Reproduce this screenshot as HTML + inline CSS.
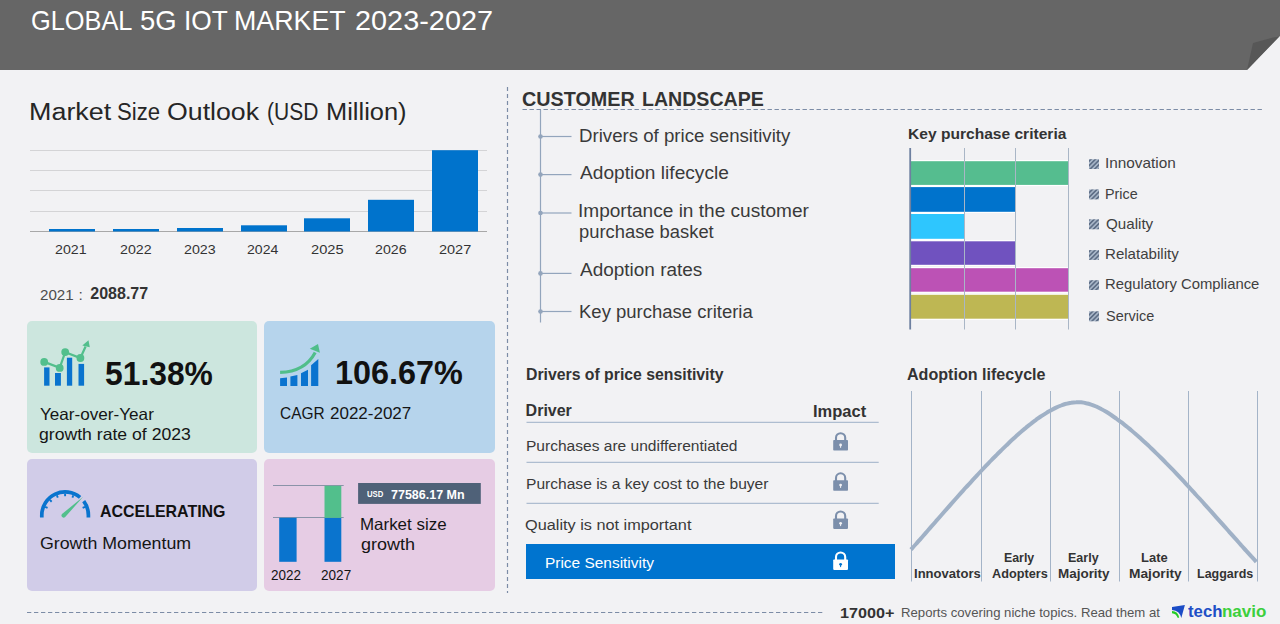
<!DOCTYPE html>
<html><head><meta charset="utf-8">
<style>
html,body{margin:0;padding:0;}
body{width:1280px;height:624px;overflow:hidden;background:#F2F2F4;position:relative;font-family:"Liberation Sans",sans-serif;}
.t{position:absolute;white-space:nowrap;line-height:1;transform-origin:0 0;}
.b{font-weight:bold;}
.abs{position:absolute;}
svg{position:absolute;left:0;top:0;}
</style></head><body>

<!-- HEADER -->
<svg width="1280" height="624" style="z-index:0">
  <polygon points="0,0 1280,0 1280,36 1247,70 0,70" fill="#666666"/>
  <polygon points="1247,70 1253,43 1273,37.5 1279,36.5" fill="#575757"/>
</svg>

<!-- LEFT CHART -->
<svg width="1280" height="624">
  <g stroke="#D4D4D6" stroke-width="1">
    <line x1="30" y1="150.5" x2="487" y2="150.5"/>
    <line x1="30" y1="170.5" x2="487" y2="170.5"/>
    <line x1="30" y1="190.5" x2="487" y2="190.5"/>
    <line x1="30" y1="211.5" x2="487" y2="211.5"/>
  </g>
  <line x1="30" y1="231.5" x2="487" y2="231.5" stroke="#A8A8A8" stroke-width="1"/>
  <g fill="#0073CC">
    <rect x="49" y="229" width="46" height="2.5"/>
    <rect x="113" y="229" width="46" height="2.5"/>
    <rect x="177" y="228" width="46" height="3.5"/>
    <rect x="241" y="225.3" width="46" height="6.2"/>
    <rect x="304" y="218.3" width="46" height="13.2"/>
    <rect x="368" y="199.8" width="46" height="31.7"/>
    <rect x="432" y="150.2" width="46" height="81.3"/>
  </g>
</svg>

<!-- CARDS -->
<div class="abs" style="left:27px;top:321px;width:230px;height:131.5px;background:#CCE6DE;border-radius:5px"></div>
<div class="abs" style="left:264px;top:321px;width:230.5px;height:131.5px;background:#B6D4EC;border-radius:5px"></div>
<div class="abs" style="left:27px;top:459px;width:230px;height:132px;background:#D1CCE8;border-radius:5px"></div>
<div class="abs" style="left:264px;top:459px;width:230.5px;height:132px;background:#E6CCE4;border-radius:5px"></div>


<!-- CARD ICONS -->
<svg width="1280" height="624">
  <!-- card1 icon -->
  <g fill="#0A74CE">
    <rect x="44.1" y="367.4" width="5.4" height="18.3"/>
    <rect x="55" y="373" width="5.9" height="12.7"/>
    <rect x="66.9" y="357.7" width="5.3" height="28"/>
    <rect x="78.5" y="363.9" width="5.6" height="21.8"/>
  </g>
  <g fill="#52BF8C" stroke="#52BF8C">
    <polyline points="44.2,361.9 59.7,367.9 65.2,352.1 80.4,358 85.6,346.5" fill="none" stroke-width="2.2"/>
    <circle cx="44.2" cy="361.9" r="3.9" stroke="none"/>
    <circle cx="59.7" cy="367.9" r="3.9" stroke="none"/>
    <circle cx="65.2" cy="352.1" r="3.9" stroke="none"/>
    <circle cx="80.4" cy="358" r="3.9" stroke="none"/>
    <polygon points="88.5,340.3 82.3,345.6 89.8,347.2" stroke="none"/>
  </g>
  <!-- card2 icon -->
  <g fill="#0A73CF">
    <polygon points="280.1,378.2 287,377.6 287,385.9 280.1,385.9"/>
    <polygon points="290.4,376.6 297.4,375 297.4,385.9 290.4,385.9"/>
    <polygon points="301,373.3 308,369.7 308,385.9 301,385.9"/>
    <polygon points="311.1,365.2 318.3,358.9 318.3,385.9 311.1,385.9"/>
  </g>
  <path d="M280.1,372.4 C295,372 308,366 315.2,352.5" fill="none" stroke="#50BE8A" stroke-width="3.1"/>
  <polygon points="318,344 309.8,348.8 319.9,352.8" fill="#50BE8A"/>
  <!-- gauge -->
  <path d="M41.80,517.4 L41.80,515.2 A23.3,23.3 0 0 1 80.08,497.35" fill="none" stroke="#0A74CE" stroke-width="3.7"/>
  <path d="M83.71,501.18 A23.3,23.3 0 0 1 88.40,515.2 L88.40,517.4" fill="none" stroke="#0A74CE" stroke-width="3.7"/>
  <g stroke="#0A74CE" stroke-width="1.9"><line x1="45.14" y1="506.93" x2="47.55" y2="507.93"/><line x1="49.83" y1="499.93" x2="51.66" y2="501.76"/><line x1="56.83" y1="495.24" x2="57.83" y2="497.65"/><line x1="65.10" y1="493.60" x2="65.10" y2="496.20"/><line x1="73.37" y1="495.24" x2="72.37" y2="497.65"/><line x1="85.06" y1="506.93" x2="82.65" y2="507.93"/></g>
  <path d="M83.2,496.8 L65.2,517.0 A2.2,2.2 0 0 1 62.0,514.0 Z" fill="#52BF8C"/>
  <!-- card4 mini chart -->
  <g stroke="#8A93A8" stroke-width="1">
    <line x1="273" y1="485.5" x2="343.7" y2="485.5"/>
    <line x1="273" y1="517.5" x2="343.7" y2="517.5"/>
  </g>
  <rect x="279.2" y="517.8" width="17.4" height="44" fill="#0A74CE"/>
  <rect x="324.5" y="517.8" width="16.8" height="44" fill="#0A74CE"/>
  <rect x="324.5" y="485.8" width="16.8" height="32" fill="#52BF8C"/>
  <rect x="358.1" y="483" width="122.7" height="20.9" fill="#4F6178"/>
</svg>

<svg width="1280" height="624">
  <!-- dashed separators -->
  <line x1="507.5" y1="87" x2="507.5" y2="593" stroke="#7C8CA6" stroke-width="1.2" stroke-dasharray="4,3"/>
  <line x1="522.5" y1="109.5" x2="1262" y2="109.5" stroke="#7C8CA6" stroke-width="1.2" stroke-dasharray="4.4,2.6"/>
  <line x1="27" y1="612.5" x2="823" y2="612.5" stroke="#7C8CA6" stroke-width="1.2" stroke-dasharray="4.3,2.7"/>
  <!-- tree -->
  <g stroke="#93A5BC" stroke-width="1.2" fill="#93A5BC">
    <line x1="540.5" y1="110" x2="540.5" y2="322.5"/>
    <line x1="540.5" y1="136.5" x2="571.5" y2="136.5"/>
    <line x1="540.5" y1="174.6" x2="571.5" y2="174.6"/>
    <line x1="540.5" y1="213" x2="571.5" y2="213"/>
    <line x1="540.5" y1="273.4" x2="571.5" y2="273.4"/>
    <line x1="540.5" y1="311.5" x2="571.5" y2="311.5"/>
    <circle cx="540.5" cy="136.5" r="2.3" stroke="none"/>
    <circle cx="540.5" cy="174.6" r="2.3" stroke="none"/>
    <circle cx="540.5" cy="213" r="2.3" stroke="none"/>
    <circle cx="540.5" cy="273.4" r="2.3" stroke="none"/>
    <circle cx="540.5" cy="311.5" r="2.3" stroke="none"/>
  </g>
  <!-- KPC bars -->
  <g fill="#ffffff">
    <rect x="911" y="160" width="157.5" height="26.1"/>
    <rect x="911" y="185.9" width="104.4" height="27.1"/>
    <rect x="911" y="212.8" width="53.6" height="27.2"/>
    <rect x="911" y="240.1" width="104.3" height="25.9"/>
    <rect x="911" y="267" width="157.5" height="25.9"/>
    <rect x="911" y="293.6" width="157.5" height="26.3"/>
  </g>
  <g>
    <rect x="911" y="161.2" width="157.5" height="23.7" fill="#55BD8F"/>
    <rect x="911" y="187.1" width="104.4" height="24.7" fill="#0073CC"/>
    <rect x="911" y="214" width="53.6" height="24.8" fill="#2EC6FE"/>
    <rect x="911" y="241.3" width="104.3" height="23.5" fill="#7052BF"/>
    <rect x="911" y="268.2" width="157.5" height="23.5" fill="#BC52B5"/>
    <rect x="911" y="294.8" width="157.5" height="23.9" fill="#BEB753"/>
  </g>
  <g stroke="#A9B6C6" stroke-width="1">
    <line x1="964.5" y1="148" x2="964.5" y2="329.5"/>
    <line x1="1015.5" y1="148" x2="1015.5" y2="329.5"/>
    <line x1="1068.5" y1="148" x2="1068.5" y2="329.5"/>
  </g>
  <line x1="910.2" y1="148" x2="910.2" y2="329.5" stroke="#6E80A0" stroke-width="1.8"/>
  <!-- legend squares -->
  <defs>
    <pattern id="hatch" patternUnits="userSpaceOnUse" width="3.2" height="3.2" patternTransform="rotate(45)">
      <rect width="3.2" height="3.2" fill="#A7B5C7"/>
      <rect width="1.6" height="3.2" fill="#5E6E86"/>
    </pattern>
  </defs>
  <g fill="url(#hatch)">
    <rect x="1089" y="159.2" width="10" height="9.8"/>
    <rect x="1089" y="189.4" width="10" height="10"/>
    <rect x="1089" y="219.3" width="10" height="10"/>
    <rect x="1089" y="250.1" width="10" height="9.8"/>
    <rect x="1089" y="280.2" width="10" height="9.8"/>
    <rect x="1089" y="311.3" width="10" height="10"/>
  </g>
  <!-- table lines -->
  <g stroke="#AEBDD0" stroke-width="1.2">
    <line x1="526.5" y1="422.4" x2="878.7" y2="422.4"/>
    <line x1="526.5" y1="462.4" x2="878.7" y2="462.4"/>
    <line x1="526.5" y1="503.3" x2="878.7" y2="503.3"/>
  </g>
  <!-- adoption lifecycle -->
  <g stroke="#A4B4C8" stroke-width="1">
    <line x1="911.5" y1="391" x2="911.5" y2="581.5"/>
    <line x1="981.5" y1="391" x2="981.5" y2="581.5"/>
    <line x1="1050.5" y1="391" x2="1050.5" y2="581.5"/>
    <line x1="1119.5" y1="391" x2="1119.5" y2="581.5"/>
    <line x1="1188.5" y1="391" x2="1188.5" y2="581.5"/>
    <line x1="1257.5" y1="391" x2="1257.5" y2="581.5"/>
  </g>
  <path d="M911.0,549.6 C911.8,548.7 914.3,545.8 916.0,544.0 C917.7,542.1 919.3,540.2 921.0,538.3 C922.7,536.4 924.3,534.5 926.0,532.6 C927.7,530.7 929.3,528.8 931.0,526.9 C932.7,525.0 934.4,523.1 936.0,521.2 C937.7,519.3 939.4,517.4 941.0,515.5 C942.7,513.6 944.4,511.7 946.0,509.8 C947.7,507.9 949.4,506.0 951.0,504.1 C952.7,502.2 954.4,500.3 956.0,498.5 C957.7,496.6 959.4,494.7 961.0,492.9 C962.7,491.0 964.4,489.2 966.0,487.3 C967.7,485.5 969.4,483.6 971.1,481.8 C972.7,480.0 974.4,478.2 976.1,476.4 C977.7,474.6 979.4,472.8 981.1,471.0 C982.7,469.3 984.4,467.5 986.1,465.7 C987.7,464.0 989.4,462.3 991.1,460.5 C992.7,458.8 994.4,457.1 996.1,455.5 C997.7,453.8 999.4,452.1 1001.1,450.5 C1002.7,448.8 1004.4,447.2 1006.1,445.6 C1007.8,444.0 1009.4,442.4 1011.1,440.8 C1012.8,439.3 1014.4,437.7 1016.1,436.2 C1017.8,434.7 1019.4,433.2 1021.1,431.8 C1022.8,430.3 1024.4,428.9 1026.1,427.6 C1027.8,426.2 1029.4,424.8 1031.1,423.6 C1032.8,422.3 1034.4,421.0 1036.1,419.8 C1037.8,418.6 1039.4,417.4 1041.1,416.3 C1042.8,415.2 1044.4,414.1 1046.1,413.1 C1047.8,412.0 1049.5,411.1 1051.1,410.2 C1052.8,409.3 1054.5,408.4 1056.1,407.6 C1057.8,406.8 1059.5,406.1 1061.1,405.5 C1062.8,404.8 1064.5,404.2 1066.1,403.8 C1067.8,403.3 1069.5,402.9 1071.1,402.7 C1072.8,402.4 1074.5,402.2 1076.1,402.2 C1077.8,402.1 1079.5,402.2 1081.1,402.3 C1082.8,402.5 1084.5,402.8 1086.2,403.2 C1087.8,403.5 1089.5,404.0 1091.2,404.6 C1092.8,405.1 1094.5,405.8 1096.2,406.5 C1097.8,407.3 1099.5,408.1 1101.2,409.0 C1102.8,409.8 1104.5,410.8 1106.2,411.8 C1107.8,412.8 1109.5,413.9 1111.2,415.0 C1112.8,416.1 1114.5,417.3 1116.2,418.5 C1117.8,419.7 1119.5,420.9 1121.2,422.2 C1122.9,423.5 1124.5,424.8 1126.2,426.1 C1127.9,427.4 1129.5,428.8 1131.2,430.2 C1132.9,431.6 1134.5,433.0 1136.2,434.5 C1137.9,435.9 1139.5,437.4 1141.2,438.9 C1142.9,440.4 1144.5,441.9 1146.2,443.5 C1147.9,445.0 1149.5,446.6 1151.2,448.2 C1152.9,449.8 1154.5,451.4 1156.2,453.1 C1157.9,454.7 1159.5,456.3 1161.2,458.0 C1162.9,459.7 1164.6,461.4 1166.2,463.1 C1167.9,464.8 1169.6,466.5 1171.2,468.2 C1172.9,469.9 1174.6,471.7 1176.2,473.4 C1177.9,475.2 1179.6,477.0 1181.2,478.7 C1182.9,480.5 1184.6,482.3 1186.2,484.1 C1187.9,485.9 1189.6,487.7 1191.2,489.5 C1192.9,491.4 1194.6,493.2 1196.2,495.0 C1197.9,496.8 1199.6,498.7 1201.3,500.5 C1202.9,502.4 1204.6,504.2 1206.3,506.1 C1207.9,507.9 1209.6,509.8 1211.3,511.7 C1212.9,513.5 1214.6,515.4 1216.3,517.3 C1217.9,519.1 1219.6,521.0 1221.3,522.9 C1222.9,524.8 1224.6,526.6 1226.3,528.5 C1227.9,530.4 1229.6,532.2 1231.3,534.1 C1232.9,536.0 1234.6,537.8 1236.3,539.7 C1238.0,541.6 1239.6,543.4 1241.3,545.3 C1243.0,547.1 1244.6,549.0 1246.3,550.8 C1248.0,552.7 1249.6,554.5 1251.3,556.4 C1253.0,558.2 1255.5,560.9 1256.3,561.8" fill="none" stroke="#A0B1C6" stroke-width="4"/>
</svg>
<!-- RIGHT SIDE -->
<div class="abs" style="left:526px;top:544px;width:369px;height:34.8px;background:#0074CF"></div>

<svg width="1280" height="624">
<g transform="translate(833.2,431.8)"><path d="M2.8,9 V6 A4.6,4.6 0 0 1 12,6 V9" fill="none" stroke="#7C8FAB" stroke-width="2.1"/><rect x="0" y="8.3" width="14.8" height="10.5" rx="0.8" fill="#7C8FAB"/><circle cx="7.4" cy="13.2" r="1.4" fill="#F2F2F4"/><rect x="6.9" y="13.4" width="1" height="2.6" fill="#F2F2F4"/></g>
<g transform="translate(833.2,471.9)"><path d="M2.8,9 V6 A4.6,4.6 0 0 1 12,6 V9" fill="none" stroke="#7C8FAB" stroke-width="2.1"/><rect x="0" y="8.3" width="14.8" height="10.5" rx="0.8" fill="#7C8FAB"/><circle cx="7.4" cy="13.2" r="1.4" fill="#F2F2F4"/><rect x="6.9" y="13.4" width="1" height="2.6" fill="#F2F2F4"/></g>
<g transform="translate(833.2,510.1)"><path d="M2.8,9 V6 A4.6,4.6 0 0 1 12,6 V9" fill="none" stroke="#7C8FAB" stroke-width="2.1"/><rect x="0" y="8.3" width="14.8" height="10.5" rx="0.8" fill="#7C8FAB"/><circle cx="7.4" cy="13.2" r="1.4" fill="#F2F2F4"/><rect x="6.9" y="13.4" width="1" height="2.6" fill="#F2F2F4"/></g>
<g transform="translate(833.2,551.1)"><path d="M2.8,9 V6 A4.6,4.6 0 0 1 12,6 V9" fill="none" stroke="#FFFFFF" stroke-width="2.1"/><rect x="0" y="8.3" width="14.8" height="10.5" rx="0.8" fill="#FFFFFF"/><circle cx="7.4" cy="13.2" r="1.4" fill="#0074CF"/><rect x="6.9" y="13.4" width="1" height="2.6" fill="#0074CF"/></g>
<path d="M1172,607.0 L1184.9,604.9 L1181.3,617.9 Q1179.8,610.6 1172,609.9 Z" fill="#1B4CC6"/>
<path d="M1172,611.0 Q1178.2,611.4 1179.2,617.7 L1177.6,617.7 Q1176.2,613.6 1172,613.2 Z" fill="#25CC25"/>
</svg>
<div class="t" style="left:31.01px;top:6.80px;font-size:27.5px;color:#fff;transform:scaleX(0.922)">GLOBAL</div>
<div class="t" style="left:140.34px;top:6.80px;font-size:27.5px;color:#fff;transform:scaleX(0.998)">5G</div>
<div class="t" style="left:183.81px;top:6.80px;font-size:27.5px;color:#fff;transform:scaleX(0.956)">IOT</div>
<div class="t" style="left:234.41px;top:6.80px;font-size:27.5px;color:#fff;transform:scaleX(0.975)">MARKET</div>
<div class="t" style="left:354.62px;top:6.80px;font-size:27.5px;color:#fff;transform:scaleX(1.050)">2023-2027</div>
<div class="t" style="left:29.32px;top:100.60px;font-size:23.5px;color:#262626;transform:scaleX(1.145)">Market</div>
<div class="t" style="left:117.42px;top:100.60px;font-size:23.5px;color:#262626;transform:scaleX(0.943)">Size</div>
<div class="t" style="left:166.86px;top:100.60px;font-size:23.5px;color:#262626;transform:scaleX(1.137)">Outlook</div>
<div class="t" style="left:267.05px;top:100.70px;font-size:23.5px;color:#262626;transform:scaleX(0.895)">(USD</div>
<div class="t" style="left:326.04px;top:100.70px;font-size:23.5px;color:#262626;transform:scaleX(1.082)">Million)</div>
<div class="t" style="left:55.22px;top:242.80px;font-size:13.6px;color:#333;transform:scaleX(1.043)">2021</div>
<div class="t" style="left:119.62px;top:242.80px;font-size:13.6px;color:#333;transform:scaleX(1.043)">2022</div>
<div class="t" style="left:183.80px;top:242.80px;font-size:13.6px;color:#333;transform:scaleX(1.049)">2023</div>
<div class="t" style="left:246.62px;top:242.80px;font-size:13.6px;color:#333;transform:scaleX(1.034)">2024</div>
<div class="t" style="left:311.20px;top:243.20px;font-size:13.6px;color:#333;transform:scaleX(1.076)">2025</div>
<div class="t" style="left:375.22px;top:243.20px;font-size:13.6px;color:#333;transform:scaleX(1.042)">2026</div>
<div class="t" style="left:438.59px;top:243.20px;font-size:13.6px;color:#333;transform:scaleX(1.064)">2027</div>
<div class="t" style="left:39.69px;top:286.80px;font-size:15.5px;color:#4d4d4d;transform:scaleX(0.977)">2021</div>
<div class="t" style="left:78.50px;top:286.80px;font-size:15.5px;color:#4d4d4d">:</div>
<div class="t b" style="left:90.29px;top:286.00px;font-size:16px;color:#333">2088.77</div>
<div class="t b" style="left:105.02px;top:358.20px;font-size:32.5px;color:#111;transform:scaleX(0.979)">51.38%</div>
<div class="t" style="left:39.87px;top:405.80px;font-size:16.5px;color:#151515;transform:scaleX(1.037)">Year-over-Year</div>
<div class="t" style="left:39.19px;top:425.80px;font-size:16.5px;color:#151515;transform:scaleX(1.068)">growth rate of 2023</div>
<div class="t b" style="left:335.01px;top:357.40px;font-size:32.5px;color:#111;transform:scaleX(0.996)">106.67%</div>
<div class="t" style="left:279.71px;top:405.40px;font-size:16.5px;color:#151515;transform:scaleX(0.935)">CAGR</div>
<div class="t" style="left:329.62px;top:405.40px;font-size:16.5px;color:#151515;transform:scaleX(1.030)">2022-2027</div>
<div class="t b" style="left:100.13px;top:503.20px;font-size:17px;color:#111;transform:scaleX(0.938)">ACCELERATING</div>
<div class="t" style="left:39.59px;top:535.40px;font-size:16.5px;color:#151515;transform:scaleX(1.077)">Growth Momentum</div>
<div class="t" style="left:271.28px;top:568.00px;font-size:14px;color:#151515;transform:scaleX(0.963)">2022</div>
<div class="t" style="left:321.26px;top:568.00px;font-size:14px;color:#151515;transform:scaleX(0.969)">2027</div>
<div class="t b" style="left:367.19px;top:489.00px;font-size:9.5px;color:#fff;transform:scaleX(0.813)">USD</div>
<div class="t b" style="left:391.07px;top:488.60px;font-size:12px;color:#fff;transform:scaleX(1.041)">77586.17 Mn</div>
<div class="t" style="left:359.91px;top:515.80px;font-size:16.5px;color:#151515;transform:scaleX(1.026)">Market size</div>
<div class="t" style="left:360.89px;top:535.60px;font-size:16.5px;color:#151515;transform:scaleX(1.090)">growth</div>
<div class="t b" style="left:522.10px;top:87.60px;font-size:21px;color:#333;transform:scaleX(0.941)">CUSTOMER</div>
<div class="t b" style="left:642.21px;top:87.60px;font-size:21px;color:#333;transform:scaleX(0.932)">LANDSCAPE</div>
<div class="t" style="left:579.40px;top:127.70px;font-size:17.5px;color:#3A3A3A;transform:scaleX(1.065)">Drivers of price sensitivity</div>
<div class="t" style="left:580.00px;top:165.20px;font-size:17.5px;color:#3A3A3A;transform:scaleX(1.093)">Adoption lifecycle</div>
<div class="t" style="left:578.37px;top:202.70px;font-size:17.5px;color:#3A3A3A;transform:scaleX(1.089)">Importance in the customer</div>
<div class="t" style="left:578.70px;top:224.25px;font-size:17.5px;color:#3A3A3A;transform:scaleX(1.049)">purchase basket</div>
<div class="t" style="left:580.20px;top:262.40px;font-size:17.5px;color:#3A3A3A;transform:scaleX(1.084)">Adoption rates</div>
<div class="t" style="left:578.61px;top:304.25px;font-size:17.5px;color:#3A3A3A;transform:scaleX(1.057)">Key purchase criteria</div>
<div class="t b" style="left:908.36px;top:125.90px;font-size:15px;color:#333;transform:scaleX(1.038)">Key purchase criteria</div>
<div class="t" style="left:1105.06px;top:155.40px;font-size:15px;color:#404040;transform:scaleX(1.022)">Innovation</div>
<div class="t" style="left:1105.39px;top:186.00px;font-size:15px;color:#404040;transform:scaleX(0.955)">Price</div>
<div class="t" style="left:1105.84px;top:216.20px;font-size:15px;color:#404040;transform:scaleX(1.011)">Quality</div>
<div class="t" style="left:1105.14px;top:246.40px;font-size:15px;color:#404040;transform:scaleX(1.005)">Relatability</div>
<div class="t" style="left:1105.17px;top:276.40px;font-size:15px;color:#404040;transform:scaleX(0.990)">Regulatory Compliance</div>
<div class="t" style="left:1105.69px;top:308.00px;font-size:15px;color:#404040;transform:scaleX(0.965)">Service</div>
<div class="t b" style="left:525.61px;top:367.30px;font-size:16px;color:#333;transform:scaleX(0.987)">Drivers of price sensitivity</div>
<div class="t b" style="left:525.60px;top:402.80px;font-size:16px;color:#333">Driver</div>
<div class="t b" style="left:813.17px;top:403.60px;font-size:16px;color:#333;transform:scaleX(1.030)">Impact</div>
<div class="t" style="left:526.34px;top:438.40px;font-size:15.5px;color:#3A3A3A;transform:scaleX(1.003)">Purchases are undifferentiated</div>
<div class="t" style="left:525.74px;top:476.30px;font-size:15.5px;color:#3A3A3A;transform:scaleX(1.005)">Purchase is a key cost to the buyer</div>
<div class="t" style="left:525.22px;top:516.60px;font-size:15.5px;color:#3A3A3A;transform:scaleX(1.050)">Quality is not important</div>
<div class="t" style="left:544.95px;top:555.20px;font-size:15.5px;color:#fff;transform:scaleX(0.996)">Price Sensitivity</div>
<div class="t b" style="left:906.50px;top:367.30px;font-size:16px;color:#333;transform:scaleX(1.005)">Adoption lifecycle</div>
<div class="t b" style="left:914.24px;top:566.90px;font-size:13.5px;color:#333;transform:scaleX(0.967)">Innovators</div>
<div class="t b" style="left:1003.89px;top:550.50px;font-size:13.5px;color:#333;transform:scaleX(0.915)">Early</div>
<div class="t b" style="left:992.33px;top:566.90px;font-size:13.5px;color:#333;transform:scaleX(0.940)">Adopters</div>
<div class="t b" style="left:1067.89px;top:550.50px;font-size:13.5px;color:#333;transform:scaleX(0.926)">Early</div>
<div class="t b" style="left:1057.79px;top:566.90px;font-size:13.5px;color:#333;transform:scaleX(0.996)">Majority</div>
<div class="t b" style="left:1141.03px;top:550.50px;font-size:13.5px;color:#333;transform:scaleX(0.961)">Late</div>
<div class="t b" style="left:1128.58px;top:566.90px;font-size:13.5px;color:#333;transform:scaleX(1.018)">Majority</div>
<div class="t b" style="left:1196.68px;top:566.90px;font-size:13.5px;color:#333;transform:scaleX(0.925)">Laggards</div>
<div class="t b" style="left:839.92px;top:605.20px;font-size:15px;color:#333;transform:scaleX(1.079)">17000+</div>
<div class="t" style="left:900.79px;top:606.40px;font-size:13px;color:#555;transform:scaleX(1.012)">Reports covering niche topics. Read them at</div>
<div class="t b" style="left:1187.54px;top:602.80px;font-size:16.5px;color:#1E4FC6;transform:scaleX(1.014)">tech</div>
<div class="t b" style="left:1221.97px;top:602.80px;font-size:16.5px;color:#3CCF3C;transform:scaleX(1.028)">navio</div>
</body></html>
